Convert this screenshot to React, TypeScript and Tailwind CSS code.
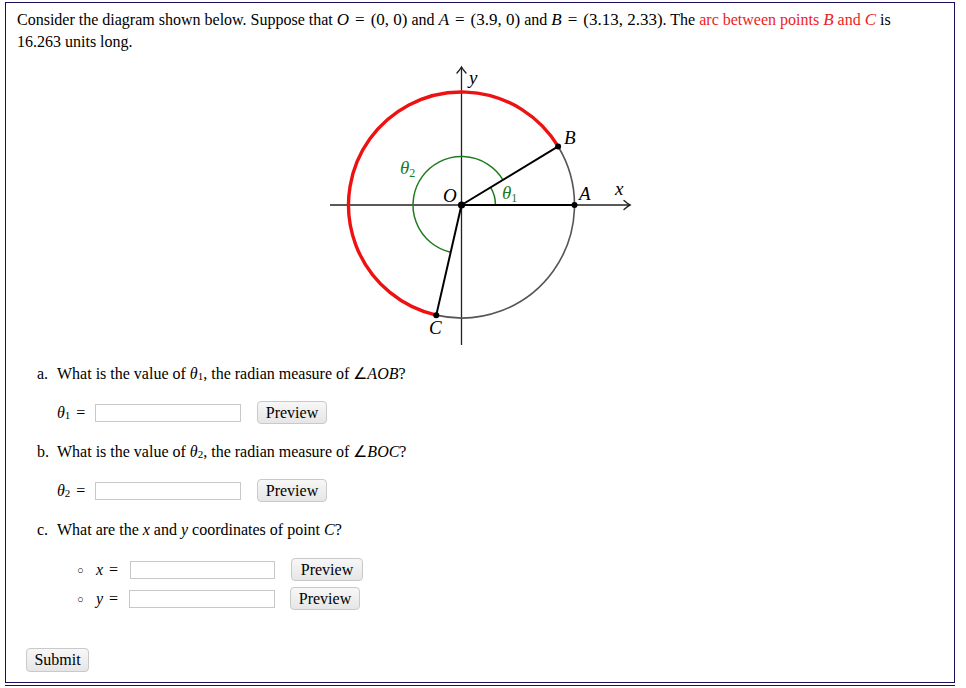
import React from "react";

const serif = { fontFamily: '"Liberation Serif", "Times New Roman", serif' };

function I({ children }: { children: React.ReactNode }) {
  return <span className="italic">{children}</span>;
}

function M({ children }: { children: React.ReactNode }) {
  return <span className="text-[17px]">{children}</span>;
}

function Eq() {
  return <span className="mx-[6px]">=</span>;
}

function Theta({ n }: { n: number }) {
  return (
    <span className="whitespace-nowrap">
      <I>θ</I>
      <sub className="text-[11px] relative top-[1px] leading-none not-italic">{n}</sub>
    </span>
  );
}

function Btn({ label, w }: { label: string; w: string }) {
  return (
    <button
      className={`h-[23px] ${w} rounded-[4px] border border-[#c9c9c9] bg-gradient-to-b from-[#f7f7f7] to-[#e6e6e6] text-[16px] text-black leading-none`}
      style={serif}
    >
      {label}
    </button>
  );
}

function Field({ w }: { w: string }) {
  return <input className={`h-[18px] ${w} border border-[#c8c8c8] bg-white outline-none`} />;
}

function Arrow({ x, y, dir }: { x: number; y: number; dir: "right" | "up" }) {
  const d =
    dir === "right"
      ? `M ${x - 6} ${y - 4.5} Q ${x - 2} ${y - 1} ${x} ${y} Q ${x - 2} ${y + 1} ${x - 6} ${y + 4.5}`
      : `M ${x - 4.5} ${y + 6} Q ${x - 1} ${y + 2} ${x} ${y} Q ${x + 1} ${y + 2} ${x + 4.5} ${y + 6}`;
  return <path d={d} fill="none" stroke="#222" strokeWidth={1.4} strokeLinecap="round" />;
}

function Diagram() {
  const O = { x: 141.5, y: 145 };
  const r = 113;
  const pt = (deg: number, rad: number) => ({
    x: O.x + rad * Math.cos((deg * Math.PI) / 180),
    y: O.y - rad * Math.sin((deg * Math.PI) / 180),
  });
  const bDeg = 31.2;
  const cDeg = 257.1;
  const A = pt(0, r);
  const B = pt(bDeg, r);
  const C = pt(cDeg, r);
  const g1s = pt(0, 34);
  const g1e = pt(bDeg, 34);
  const g2s = pt(bDeg, 48.5);
  const g2e = pt(cDeg, 48.5);
  const lab = { fontFamily: '"Liberation Serif", "Times New Roman", serif', fontStyle: "italic" as const, fontSize: 19 };
  return (
    <svg width={320} height={290} viewBox="0 0 320 290" className="block">
      <line x1={10} y1={O.y} x2={310} y2={O.y} stroke="#222" strokeWidth={1.3} />
      <line x1={O.x} y1={285} x2={O.x} y2={7} stroke="#222" strokeWidth={1.3} />
      <Arrow x={310} y={O.y} dir="right" />
      <Arrow x={O.x} y={7} dir="up" />
      <path d={`M ${C.x} ${C.y} A ${r} ${r} 0 0 0 ${B.x} ${B.y}`} fill="none" stroke="#555" strokeWidth={1.6} />
      <path d={`M ${B.x} ${B.y} A ${r} ${r} 0 1 0 ${C.x} ${C.y}`} fill="none" stroke="#ee1111" strokeWidth={3.4} />
      <path d={`M ${g1s.x} ${g1s.y} A 34 34 0 0 0 ${g1e.x} ${g1e.y}`} fill="none" stroke="#1e7a1e" strokeWidth={1.5} />
      <path d={`M ${g2s.x} ${g2s.y} A 48.5 48.5 0 1 0 ${g2e.x} ${g2e.y}`} fill="none" stroke="#1e7a1e" strokeWidth={1.5} />
      <line x1={O.x} y1={O.y} x2={A.x} y2={A.y} stroke="#000" strokeWidth={2} />
      <line x1={O.x} y1={O.y} x2={B.x} y2={B.y} stroke="#000" strokeWidth={2} />
      <line x1={O.x} y1={O.y} x2={C.x} y2={C.y} stroke="#000" strokeWidth={2} />
      <circle cx={O.x} cy={O.y} r={3.6} fill="#000" />
      <circle cx={A.x} cy={A.y} r={3} fill="#000" />
      <circle cx={B.x} cy={B.y} r={3} fill="#000" />
      <circle cx={C.x} cy={C.y} r={3} fill="#000" />
      <text x={123} y={142} style={lab}>O</text>
      <text x={259} y={140} style={lab}>A</text>
      <text x={244} y={84} style={lab}>B</text>
      <text x={109} y={274} style={lab}>C</text>
      <text x={295} y={135} style={lab}>x</text>
      <text x={149} y={24} style={lab}>y</text>
      <text x={182} y={139} style={lab} fill="#1e7a1e">
        θ<tspan fontSize={12} fontStyle="normal" dy={3}>1</tspan>
      </text>
      <text x={80} y={114} style={lab} fill="#1e7a1e">
        θ<tspan fontSize={12} fontStyle="normal" dy={3}>2</tspan>
      </text>
    </svg>
  );
}

export default function App() {
  return (
    <div className="w-[966px] h-[688px] overflow-hidden bg-white text-black" style={serif}>
      <div className="pt-[2px] pl-[5px] w-[955px]">
        <div className="border border-[#1c0f5e] pt-[6px] pb-[10px] text-[16px] leading-[22px]">
          <p className="pl-[11px] pr-[10px]">
            Consider the diagram shown below. Suppose that{" "}
            <M>
              <I>O</I>
              <Eq />
              (0, 0)
            </M>{" "}
            and{" "}
            <M>
              <I>A</I>
              <Eq />
              (3.9, 0)
            </M>{" "}
            and{" "}
            <M>
              <I>B</I>
              <Eq />
              (3.13, 2.33)
            </M>
            . The{" "}
            <span className="text-[#ee1c1c]">
              arc between points <M><I>B</I></M> and <M><I>C</I></M>
            </span>{" "}
            is
            <br />
            16.263 units long.
          </p>

          <div className="mt-[7px] flex justify-center">
            <Diagram />
          </div>

          <div>
            <div className="mt-[13px] flex pl-[31px]">
              <span className="w-[20px]">a.</span>
              <span>
                What is the value of <Theta n={1} />, the radian measure of ∠<I>AOB</I>?
              </span>
            </div>
            <div className="mt-[16px] flex items-center pl-[51px] h-[23px]">
              <span className="w-[38px]">
                <Theta n={1} />
                <span className="ml-[6px]">=</span>
              </span>
              <Field w="w-[146px]" />
              <span className="w-[16px]" />
              <Btn label="Preview" w="w-[70px]" />
            </div>

            <div className="mt-[17px] flex pl-[31px]">
              <span className="w-[20px]">b.</span>
              <span>
                What is the value of <Theta n={2} />, the radian measure of ∠<I>BOC</I>?
              </span>
            </div>
            <div className="mt-[16px] flex items-center pl-[51px] h-[23px]">
              <span className="w-[38px]">
                <Theta n={2} />
                <span className="ml-[6px]">=</span>
              </span>
              <Field w="w-[146px]" />
              <span className="w-[16px]" />
              <Btn label="Preview" w="w-[70px]" />
            </div>

            <div className="mt-[17px] flex pl-[31px]">
              <span className="w-[20px]">c.</span>
              <span>
                What are the <I>x</I> and <I>y</I> coordinates of point <I>C</I>?
              </span>
            </div>
            <div className="mt-[17px] flex items-center pl-[71px] h-[23px]">
              <span className="w-[19px] text-[11px]">○</span>
              <span className="w-[34px]">
                <I>x</I>
                <span className="ml-[6px]">=</span>
              </span>
              <Field w="w-[145px]" />
              <span className="w-[16px]" />
              <Btn label="Preview" w="w-[72px]" />
            </div>
            <div className="mt-[6px] flex items-center pl-[71px] h-[23px]">
              <span className="w-[19px] text-[11px]">○</span>
              <span className="w-[33px]">
                <I>y</I>
                <span className="ml-[6px]">=</span>
              </span>
              <Field w="w-[146px]" />
              <span className="w-[15px]" />
              <Btn label="Preview" w="w-[70px]" />
            </div>

            <div className="mt-[38px] pl-[20px]">
              <button
                className="h-[24px] w-[63px] rounded-[4px] border border-[#c9c9c9] bg-gradient-to-b from-[#f7f7f7] to-[#e6e6e6] text-[16px] leading-none"
                style={serif}
              >
                Submit
              </button>
            </div>
          </div>
        </div>
        <div className="mt-[2px] border-t border-[#1c0f5e] h-[4px]" />
      </div>
    </div>
  );
}
